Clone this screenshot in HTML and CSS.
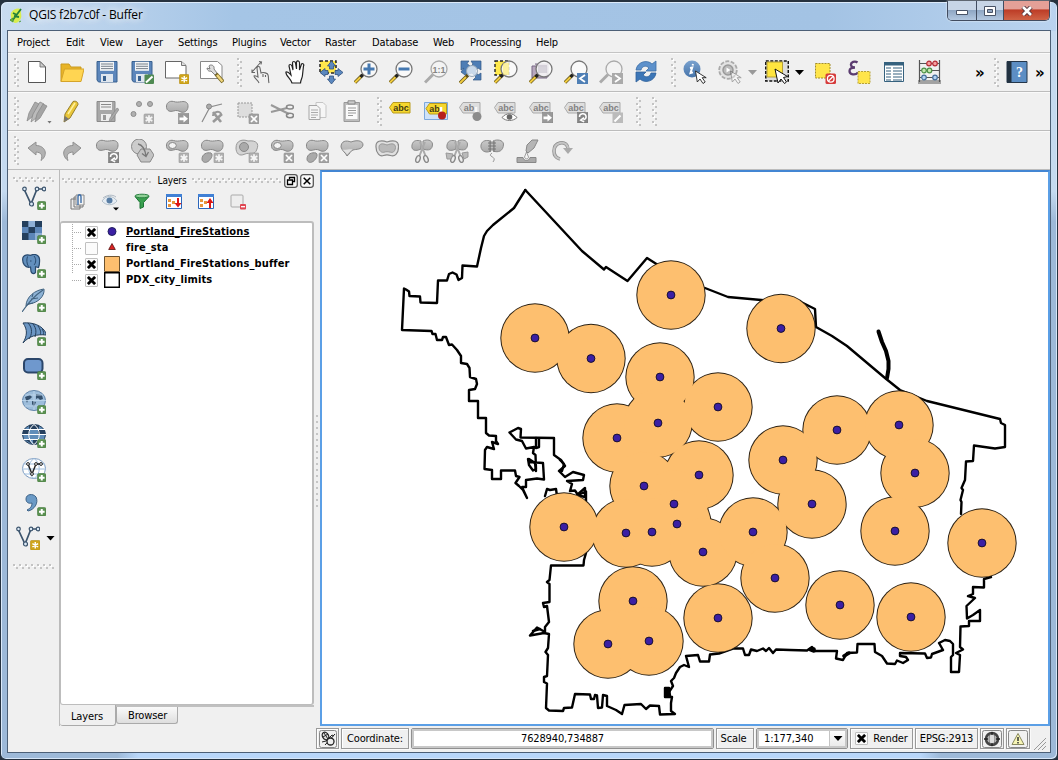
FILE: index.html
```html
<!DOCTYPE html>
<html lang="en">
<head>
<meta charset="utf-8">
<title>QGIS f2b7c0f - Buffer</title>
<link rel="stylesheet" href="styles.css">
</head>
<body>
<svg class="defs" aria-hidden="true">
  <defs>
    <linearGradient id="steel" x1="0" y1="0" x2="0" y2="1"><stop offset="0" stop-color="#7aa2cf"/><stop offset="1" stop-color="#4674aa"/></linearGradient>
    <linearGradient id="gray" x1="0" y1="0" x2="0" y2="1"><stop offset="0" stop-color="#c9c9c9"/><stop offset="1" stop-color="#aaa"/></linearGradient>
    <g id="plus"><rect x="15.5" y="15.5" width="8.5" height="8.5" rx="1.5" fill="#5a9150" stroke="#467a40" stroke-width=".6"/><path d="M19.75 17v5.6M17 19.75h5.6" stroke="#fff" stroke-width="2"/></g>
    <g id="star"><rect x="14.5" y="14.5" width="9.5" height="9.5" rx="1" fill="#cfa51c" stroke="#b48c10" stroke-width=".6"/><path d="M19.25 16v6.6M16.4 17.6l5.7 3.3M22.1 17.6l-5.7 3.3" stroke="#fff" stroke-width="1.4"/></g>
    <g id="gstar"><rect x="14" y="14" width="10" height="10" rx="1" fill="#b1b1b1" stroke="#999" stroke-width=".6"/><path d="M19 15.2v7.6M15.700 17.100l6.600 3.800M22.300 17.100l-6.600 3.800" stroke="#f6f6f6" stroke-width="1.700"/></g>
    <g id="gx"><rect x="14" y="14" width="10" height="10" rx="1" fill="#a3a3a3" stroke="#8e8e8e" stroke-width=".6"/><path d="M16 16l6 6M22 16l-6 6" stroke="#fff" stroke-width="1.700"/></g>
    <g id="garrow"><rect x="13.500" y="13.500" width="10.500" height="10.500" fill="#999" stroke="#858585" stroke-width=".6"/><path d="M14.500 17.400h4v-2.400l4.500 3.800-4.500 3.800v-2.400h-4z" fill="#fff"/></g>
    <g id="gturn"><rect x="13.500" y="13.500" width="10.500" height="10.500" fill="#858585" stroke="#777" stroke-width=".6"/><path d="M15.500 18a3.300 3 0 1 1 4 2.700M20 18.600l-3.300 2.500 3.500 1.700" fill="none" stroke="#fff" stroke-width="1.500"/></g>
    <path id="blob" d="M1.500 7.500c-.5-4.500 3-7 7-6 3 1 5 .5 8 .2 4-.7 7 1 6.500 5.300-.5 4.500-4 6-7 5-3-1.500-4.500-2-7.500-1C5 12 2 11 1.500 7.500z" fill="url(#gray)" stroke="#868686"/>
    <g id="lens"><path d="M1 22.500L8.500 15" stroke="#665718" stroke-width="3.400"/><path d="M1 22.500L6.600 17" stroke="#f1cb3e" stroke-width="2"/><path d="M6.500 17l3-3" stroke="#222" stroke-width="3"/><circle cx="15" cy="9" r="8" fill="#fafafa" fill-opacity=".85" stroke="#777" stroke-width="1.300"/></g>
    <g id="glens"><path d="M1 22.500L9 14.500" stroke="#aaa" stroke-width="3"/><circle cx="15" cy="9" r="8" fill="#f3f3f3" stroke="#aaa" stroke-width="1.300"/></g>
    <path id="cursor" d="M12.500 11l1.800 11 2.700-3 3 4.500 2.200-1.500-3-4.300h4z" fill="#fff" stroke="#222" stroke-width=".9"/>
    <g id="disk"><path d="M2 1.500h20v20.500H3.500L2 20z" fill="#5c86bb" stroke="#39618f"/><path d="M5 1.800h14v9H5z" fill="#f2f4f6"/><path d="M6 4h12M6 6.300h12M6 8.600h12" stroke="#69747f" stroke-width=".9"/><path d="M6 14h12v8H6z" fill="#dfe6ee"/><path d="M8 16h3v5H8z" fill="#39618f"/></g>
    <path id="tag" d="M.5 8.500L4 3.500h17v10.500H4z"/>
  </defs>
  <symbol id="new" viewBox="0 0 24 24"><path d="M3.500 1.500h11.500l5.500 5.500v15.500h-17z" fill="#fff" stroke="#555"/><path d="M15 1.500V7h5.500z" fill="#ccc" stroke="#666" stroke-width=".8"/></symbol>
  <symbol id="open" viewBox="0 0 24 24"><path d="M1 21.500V4h8l2 3h10v4" fill="#e8b427" stroke="#c99a20"/><path d="M4.500 9H24l-3 12.500H1z" fill="#ffd552" stroke="#d5a42a"/></symbol>
  <symbol id="save" viewBox="0 0 24 24"><use href="#disk"/></symbol>
  <symbol id="saveas" viewBox="0 0 24 24"><use href="#disk"/><rect x="14.500" y="14.500" width="9.500" height="9.500" rx="1" fill="#4f8a52"/><path d="M16 22.500l6.500-6" stroke="#fff" stroke-width="2"/></symbol>
  <symbol id="composer" viewBox="0 0 24 24"><path d="M.5 1.500h16l4.500 4v12.500H.5z" fill="#fff" stroke="#666"/><path d="M16.500 1.500v4H21" fill="#ddd" stroke="#777"/><use href="#star"/></symbol>
  <symbol id="manager" viewBox="0 0 24 24"><path d="M.5 1.500h17l4.500 4v13H.5z" fill="#fff" stroke="#888"/><path d="M9 6c1-2 6-1 5 3l3 4-2 2-4-4c-3 1-4-2-4-3l3 1z" fill="#ddd" stroke="#666" stroke-width=".8"/><path d="M16 14l7 8" stroke="#776624" stroke-width="4"/><path d="M17 15l5.500 6.500" stroke="#f0d67c" stroke-width="2.400"/></symbol>
  <symbol id="touch" viewBox="0 0 24 24"><path d="M10 23c-1-3-5-5-5-7 1-1 2 0 4 1L8 8c0-2 3-2 3 0l1 5c2-1 7 0 7 2 1 3 0 4 1 8M3 12l9-10M10 1.500l2.500.5-.5 2.500M3 9.500v3h3M14 14v3M16.500 15v2" fill="none" stroke="#666" stroke-width="1.100"/></symbol>
  <symbol id="pan" viewBox="0 0 24 24"><path d="M8 23c-1-4-7-8-6-11 2-1 4 2 5 3L5 6c0-2 2-2 3 0l1 4-.5-7c0-2 2.500-2 3 0l1 6V2c1-2 3-1 3 1v7l2-6c1-1 3 0 2 2l-1 9c0 3-2 5-2 8z" fill="#fff" stroke="#222" stroke-width="1.200"/></symbol>
  <symbol id="panto" viewBox="0 0 24 24"><path d="M1 1h16v12H1z" fill="#ffe84c" stroke="#222" stroke-width="1.500" stroke-dasharray="3 2"/><path d="M12.500 1l4 5h-2v3h-4V6h-2zM12.500 24l4-5h-2v-3h-4v3h-2zM1 12.500l5-4v2h3v4H6v2zM24 12.500l-5-4v2h-3v4h3v2z" fill="#5b88bf" stroke="#31537f" stroke-width=".8"/></symbol>
  <symbol id="zin" viewBox="0 0 24 24"><use href="#lens"/><path d="M15 3.500v11M9.500 9h11" stroke="#4578b0" stroke-width="3"/></symbol>
  <symbol id="zout" viewBox="0 0 24 24"><use href="#lens"/><path d="M9.500 9h11" stroke="#4578b0" stroke-width="3"/></symbol>
  <symbol id="zfull" viewBox="0 0 24 24"><path d="M2 1h8L8 3.500l3.500 3L14 4l-2-3h10v9l-3-2-3 3 3 4 3-2v7h-8l3-3-4-4-7 2-4-3 3-4-3 2z" fill="#4d7db5" stroke="#305785" stroke-width=".7"/><path d="M1 23l8-8" stroke="#5f5018" stroke-width="3.400"/><path d="M1 23l6-6" stroke="#f1cb3e" stroke-width="2"/><circle cx="13" cy="11" r="5.500" fill="#e9f0f8" fill-opacity=".8" stroke="#98a8b8"/></symbol>
  <symbol id="zsel" viewBox="0 0 24 24"><path d="M1 1h14v14H1z" fill="#ffe94d" stroke="#222" stroke-width="1.400" stroke-dasharray="3 2"/><use href="#lens"/><path d="M9 3h6v12H9z" fill="#ffe94d" opacity=".45"/></symbol>
  <symbol id="zlayer" viewBox="0 0 24 24"><path d="M3 6h15v12H3zM6 4h13v13" fill="#b7a7bd" stroke="#786986"/><use href="#lens"/><path d="M9 5h9v8H9z" fill="#aaa3b3" opacity=".35"/></symbol>
  <symbol id="zlast" viewBox="0 0 24 24"><use href="#lens"/><path d="M13 13h11v11H13z" fill="#4f7fb5"/><path d="M21 15l-5 3.500 5 3.500" fill="none" stroke="#fff" stroke-width="1.800"/></symbol>
  <symbol id="znext" viewBox="0 0 24 24"><use href="#glens"/><path d="M13 13h11v11H13z" fill="#aaa"/><path d="M16 15l5 3.500-5 3.500" fill="none" stroke="#fff" stroke-width="1.800"/></symbol>
  <symbol id="refresh" viewBox="0 0 24 24"><path d="M2 10C3 2 13-1 18 4l4-3v10H12l3-3C12 5 8 6 7 10z" fill="#5d91cb" stroke="#3d6ea6" stroke-width=".8"/><path d="M22 13c-1 8-11 11-16 6l-4 3V12h10l-3 3c3 3 7 2 8-2z" fill="#3c76b7" stroke="#2f619b" stroke-width=".8"/></symbol>
  <symbol id="identify" viewBox="0 0 24 24"><circle cx="9" cy="9" r="8.500" fill="url(#steel)"/><path d="M10 4l-.4 1.500M7 8l2.200-.5L7.500 13l2.500-.6" fill="none" stroke="#fff" stroke-width="2"/><use href="#cursor"/></symbol>
  <symbol id="action" viewBox="0 0 24 24"><circle cx="10" cy="10" r="8.800" fill="#e3e3e3" stroke="#aaa" stroke-width="1.800" stroke-dasharray="4 1.500"/><circle cx="10" cy="10" r="5" fill="#bbb" stroke="#999" stroke-width="1.500"/><path d="M8.500 7.500v5l4-2.500z" fill="#fff"/><g opacity=".4"><use href="#cursor"/></g></symbol>
  <symbol id="select" viewBox="0 0 24 24"><path d="M.8 1h22.500v20H.8z" fill="#ddd" stroke="#111" stroke-width="1.500" stroke-dasharray="3 1.500"/><path d="M2 2h15.500v15H2z" fill="#ffe53f" stroke="#b39f3b"/><path d="M10 9l3 14 3-4 3.500 4.500 2-1.500-3-4.500 4-1z" fill="#fff" stroke="#111"/></symbol>
  <symbol id="deselect" viewBox="0 0 24 24"><path d="M3.500 3.500h14.500v14.500H3.500z" fill="#ffe54a" stroke="#a38e29" stroke-dasharray="2 1"/><rect x="13.500" y="13.500" width="10.500" height="10.500" rx="1.500" fill="#d63b3b"/><circle cx="18.750" cy="18.750" r="3.300" fill="none" stroke="#fff" stroke-width="1.300"/><path d="M16.500 21l4.500-4.500" stroke="#fff" stroke-width="1.300"/></symbol>
  <symbol id="expr" viewBox="0 0 24 24"><path d="M10.500 2.500C8 .5 3.500 2 4 5c.2 2 2 2.500 4 2.500-3 0-5.500 1-5.500 3.500 0 4 6 4.500 8.500 1.500" fill="none" stroke="#5b3c70" stroke-width="2.300"/><path d="M11 11.500h12v12H11z" fill="#ffe54a" stroke="#b7a237" stroke-dasharray="2 1"/></symbol>
  <symbol id="table" viewBox="0 0 24 24"><path d="M2.500 2.500h19v19h-19z" fill="#fff" stroke="#35617e"/><path d="M2 2h20v3.500H2z" fill="#35617e"/><path d="M4 8h5M11 8h9M4 11h5M11 11h9M4 14h5M11 14h9M4 17h5M11 17h9M4 20h5M11 20h9" stroke="#35617e" stroke-width="1.200"/></symbol>
  <symbol id="abacus" viewBox="0 0 24 24"><path d="M2.500 0v22M22.500 0v22M1 23h23M2 3.500h21M2 10.500h21M2 17.500h21M1 21h23" stroke="#555" stroke-width="1.200"/><g stroke-width="1.200"><g fill="#f6a0a0" stroke="#b52b35"><circle cx="12" cy="3.500" r="2.300"/><circle cx="18" cy="3.500" r="2.300"/></g><g fill="#c6e7b0" stroke="#4c9147"><circle cx="7" cy="10.500" r="2.300"/><circle cx="12.500" cy="10.500" r="2.300"/></g><g fill="#b3d3f2" stroke="#456f9b"><circle cx="7" cy="17.500" r="2.300"/><circle cx="18" cy="17.500" r="2.300"/></g></g></symbol>
  <symbol id="book" viewBox="0 0 24 24"><path d="M2 1.500h20v21H2z" fill="#5c8ec4" stroke="#24364a"/><path d="M2 1.500h4.500v21H2z" fill="#223241"/></symbol>

  <symbol id="edits" viewBox="0 0 24 24"><g stroke="#8a8a8a" stroke-width=".8"><path d="M2 21l2-8L10 2l4 2L7 17z" fill="#aaa"/><path d="M6 22l2-8 7-12 4 2-8 14z" fill="#bbb"/><path d="M10 22l2-8 6-10 4 2-7 12z" fill="#a4a4a4"/></g></symbol>
  <symbol id="pencil" viewBox="0 0 24 24"><path d="M4 22l1-8L13 1.500c3-1 5 .5 5 3L10 18z" fill="#e9c63a" stroke="#8b7421" stroke-width=".9"/><path d="M8 14l7-11" stroke="#fff1a0" stroke-width="1.500"/><path d="M4 22l1-6 4 3z" fill="#777"/></symbol>
  <symbol id="gsave" viewBox="0 0 24 24"><path d="M2 1.500h18v20H2z" fill="#a8a8a8" stroke="#8a8a8a"/><path d="M5 2h12v8H5zM6 14h10v7H6z" fill="#eee"/><path d="M6 4.500h10M6 7h10" stroke="#888"/><path d="M8 15h3v5H8z" fill="#999"/><path d="M14 22l1-4 7-10 2 1.500-7 10z" fill="#aaa" stroke="#888" stroke-width=".7"/></symbol>
  <symbol id="addpt" viewBox="0 0 24 24"><g fill="#b0b0b0" stroke="#8d8d8d"><circle cx="9" cy="4" r="2.500"/><circle cx="20" cy="4" r="2.500"/><circle cx="3.500" cy="14" r="2.500"/></g><use href="#gstar"/></symbol>
  <symbol id="movef" viewBox="0 0 24 24"><use href="#blob"/><use href="#garrow"/></symbol>
  <symbol id="node" viewBox="0 0 24 24"><path d="M2 22L10 7l12-3" fill="none" stroke="#8a8a8a" stroke-width="1.200"/><circle cx="9" cy="6.500" r="2.500" fill="#aaa" stroke="#888"/><path d="M13 12l8 10M22 14l-9 8" stroke="#999" stroke-width="2.600"/><path d="M13 16c0-4 7-6 8-2" fill="none" stroke="#999" stroke-width="2"/></symbol>
  <symbol id="delsel" viewBox="0 0 24 24"><path d="M3 3h14v14H3z" fill="#ddd" stroke="#999" stroke-dasharray="2 1"/><use href="#gx"/></symbol>
  <symbol id="cut" viewBox="0 0 24 24"><path d="M1 5l18 9M1 12l16-4" stroke="#999" stroke-width="2"/><g fill="none" stroke="#888" stroke-width="1.600"><ellipse cx="20" cy="7" rx="3.500" ry="2"/><ellipse cx="20" cy="15.500" rx="3.500" ry="2.200"/></g></symbol>
  <symbol id="copy" viewBox="0 0 24 24"><path d="M11 2.500h7l3 3v12h-10z" fill="#f6f6f6" stroke="#c5c5c5"/><path d="M4 5.500h8l3 3v11H4z" fill="#f4f4f4" stroke="#a6a6a6"/><path d="M6 10h7M6 12.500h7M6 15h7M6 17.500h5" stroke="#aaa"/></symbol>
  <symbol id="paste" viewBox="0 0 24 24"><path d="M4 2.500h15.500v19H4z" fill="#bdbdbd" stroke="#999"/><path d="M6 5h11.500v14H6z" fill="#fafafa"/><path d="M8 .8h7V4H8z" fill="#ccc" stroke="#888"/><path d="M8 8h8M8 10.500h8M8 13h8M8 15.500h5" stroke="#999"/></symbol>

  <symbol id="undo" viewBox="0 0 24 24"><path d="M3 9l8-6v3.500c9 0 13 9 5 15 2-6 0-8-5-8.500V16z" fill="#b2b2b2" stroke="#909090"/></symbol>
  <symbol id="redo" viewBox="0 0 24 24"><path d="M21 9l-8-6v3.500c-9 0-13 9-5 15-2-6 0-8 5-8.500V16z" fill="#b2b2b2" stroke="#909090"/></symbol>
  <symbol id="rotf" viewBox="0 0 24 24"><use href="#blob"/><use href="#gturn"/></symbol>
  <symbol id="simplify" viewBox="0 0 24 24"><circle cx="9" cy="7.500" r="7.500" fill="#ccc" stroke="#888"/><path d="M11 10h9l4 6-4 7h-9l-4-7z" fill="#c3c3c3" stroke="#888"/><path d="M8 5c5 1 7 5 8 12M18.500 13L16 17.500l-4-3" fill="none" stroke="#777" stroke-width="1.300"/></symbol>
  <symbol id="ring" viewBox="0 0 24 24"><use href="#blob"/><ellipse cx="7.500" cy="6.500" rx="3.800" ry="3" fill="#f4f4f4" stroke="#888"/><use href="#gstar"/></symbol>
  <symbol id="part" viewBox="0 0 24 24"><use href="#blob"/><path d="M2 20c0-5 5-7 9-6 3 2-1 8-4 9-2 1-5 0-5-3z" fill="#aaa" stroke="#888"/><use href="#gstar"/></symbol>
  <symbol id="fill" viewBox="0 0 24 24"><path d="M1 9c0-8 7-9 12-7 9-1 11 3 9 8-2 7-7 3-12 5-6 3-9-1-9-6z" fill="#d3d3d3" stroke="#999"/><circle cx="9" cy="8" r="4.500" fill="#aaa" stroke="#888"/><use href="#gstar"/></symbol>
  <symbol id="delring" viewBox="0 0 24 24"><use href="#blob"/><ellipse cx="7.500" cy="6.500" rx="3.800" ry="3" fill="#f4f4f4" stroke="#888"/><use href="#gx"/></symbol>
  <symbol id="delpart" viewBox="0 0 24 24"><use href="#blob"/><path d="M2 20c0-5 5-7 9-6 3 2-1 8-4 9-2 1-5 0-5-3z" fill="#aaa" stroke="#888"/><use href="#gx"/></symbol>
  <symbol id="reshape" viewBox="0 0 24 24"><path d="M1 8c0-6 5-7 10-5 5-2 12-2 12 3-1 5-7 4-10 5-3 1-3 4-6 6-1-3-5-5-6-9z" fill="url(#gray)" stroke="#868686"/><path d="M2.500 10.500c2 1 8-1 10 0-2 1-3 3-5.500 5-1-2-3-3-4.500-5z" fill="#e2e2e2"/></symbol>
  <symbol id="offset" viewBox="0 0 24 24"><path d="M1 8c-.5-6 5-7.500 11-5 7-2.500 12-1 11.500 5 0 7-4 10-8 8.500-2-.7-5-.7-7 0C5 18 1 14 1 8z" fill="#e0e0e0" stroke="#888" stroke-width="1.200"/><path d="M4 8.500c0-4 3-4.500 8-2.500 5-2 8.500-1.500 8.500 2.500-.5 4.500-3 5.500-5 4.700-3-.7-4-.7-6.500 0-2 .8-5-1-5-4.700z" fill="#b9b9b9" stroke="#999"/></symbol>
  <symbol id="split" viewBox="0 0 24 24"><path d="M11 10C5 13 1 11 2 6c1-5 5-5 9-4zM13 10V2c4-2 9-1 9.500 3 0 6-4 7-9.500 5z" fill="url(#gray)" stroke="#8b8b8b"/><path d="M10 3l6 15M15 3L9 18" stroke="#aaa" stroke-width="2"/><g fill="#eee" stroke="#888" stroke-width="1.400"><ellipse cx="8" cy="20" rx="2" ry="3.500" transform="rotate(20 8 20)"/><ellipse cx="16" cy="20" rx="2" ry="3.500" transform="rotate(-20 16 20)"/></g></symbol>
  <symbol id="splitp" viewBox="0 0 24 24"><use href="#split"/><path d="M1 14l7 1-2 5H2zM17 14l6-1v5l-4 2z" fill="#bbb" stroke="#999"/></symbol>
  <symbol id="merge" viewBox="0 0 24 24"><path d="M11 12C5 15 0 11 1 6c1-5 6-5 10-4zM13 12V2c4-2 10-1 10.500 3 0 7-5 9-10.500 7z" fill="url(#gray)" stroke="#8b8b8b"/><path d="M8 4h8M8 7h8M8 10h8M10 2v11M14 2v11" stroke="#777"/><path d="M12 14c-6 4 6 3 1 9" fill="none" stroke="#999"/></symbol>
  <symbol id="trace" viewBox="0 0 24 24"><path d="M11 12l1-6 5-5h6l-4 8-6 5z" fill="#b5b5b5" stroke="#888"/><path d="M2 18.500h6c1 4 6 4 7 0h6v5H2z" fill="#aaa" stroke="#888"/><path d="M11.500 13l-2 5c1 3 4 2 4 0z" fill="#f5f5f5" stroke="#888" stroke-width=".8"/></symbol>
  <symbol id="rotsym" viewBox="0 0 24 24"><path d="M10 20C2 18 2 6 10 4c5-1 8 2 8 6" fill="none" stroke="#8d8d8d" stroke-width="3.500"/><path d="M10 20C2 18 2 6 10 4c5-1 8 2 8 6" fill="none" stroke="#c5c5c5" stroke-width="2"/><path d="M13 9h10l-5 6z" fill="#aaa"/></symbol>

  <symbol id="vector" viewBox="0 0 24 24"><path d="M2 3l7 15 6-15h7" fill="none" stroke="#3c546d" stroke-width="1.700"/><g fill="#dce9f5" stroke="#3c546d" stroke-width="1.200"><circle cx="2.500" cy="3" r="1.800"/><circle cx="15" cy="3" r="1.800"/><circle cx="22" cy="3" r="1.800"/><circle cx="9.500" cy="18" r="2"/></g></symbol>
  <symbol id="addvec" viewBox="0 0 24 24"><use href="#vector"/><use href="#plus"/></symbol>
  <symbol id="addras" viewBox="0 0 24 24"><path d="M0 1h20v19H0z" fill="#5c86b8"/><path d="M0 1h6.500v6H0zM13 1h7v6h-7zM6.500 7H13v6H6.500zM0 13h6.500v7H0z" fill="#243f5d"/><path d="M6.500 1H13v6H6.500zM13 13h7v7h-7z" fill="#8fb0d6"/><use href="#plus"/></symbol>
  <symbol id="addpg" viewBox="0 0 24 24"><path d="M.8 4C2 0 6 .5 9 1.300 12-.5 17 .5 17.500 5c.3 4 0 6-1 8.500l-3-.8v5.800c-2 2-4 .8-4.500-1l-.5-4.500C3 14.500 0 9 .8 4z" fill="#628fbd" stroke="#294a6e" stroke-width="1.200"/><path d="M5.500 2.500c-1 3-1 7 1 10M12 2c2.500 3 2 7 0 9M8 7h1.500" fill="none" stroke="#294a6e"/><use href="#plus"/></symbol>
  <symbol id="addspl" viewBox="0 0 24 24"><path d="M4 18C4 9 13 2 22 1c1 7-6 14-15 15z" fill="#8db2d5" stroke="#41627f"/><path d="M0 24C6 15 12 8 21 2M9 11l7-1M6 16l5-1M10 9l1-3" fill="none" stroke="#41627f" stroke-width="1.100"/><use href="#plus"/></symbol>
  <symbol id="addms" viewBox="0 0 24 24"><path d="M1 1c9-1 19 2 23 10v2c-9-1-17 1-23 8 4-7 5-13 0-20z" fill="#6b96c4" stroke="#26405c"/><path d="M6 1c5 5 4 12 1 16M11 2c4 5 3 9 2 13M16 4c3 4 3 7 2 9M20 7c2 3 2 4 1 6" fill="none" stroke="#26405c"/><use href="#plus"/></symbol>
  <symbol id="addora" viewBox="0 0 24 24"><rect x="2" y="3" width="18.500" height="13.500" rx="4" fill="#6f98cd" stroke="#2b466a" stroke-width="2"/><use href="#plus"/></symbol>
  <symbol id="addwms" viewBox="0 0 24 24"><ellipse cx="12" cy="10.500" rx="11.500" ry="10" fill="#9dbddb" stroke="#6184a9"/><path d="M3 7l5-2 2 2-2 2-2 1-1 3zM14 4l6 1 1 4-3 1-2-2-2 1zM10 11l4 1-2 5-2-3z" fill="#344f6b"/><path d="M0 10.500h24M12 1v19M3 5h18M3 16h18" stroke="#c0d8ee" stroke-width=".8"/><use href="#plus"/></symbol>
  <symbol id="addwcs" viewBox="0 0 24 24"><ellipse cx="12" cy="10.500" rx="11.500" ry="10" fill="#608db9" stroke="#233e5b"/><path d="M1 6h6v5H1zM16 6h7v5h-7zM7 1h10v4H7zM2 15h5l3 5zM11 15h5v5h-5z" fill="#26405e"/><path d="M1 5.500h22M0 10.500h24M2 15.500h20M12 .5C5 5 5 16 12 20.500M12 .5c7 4.500 7 15.500 0 20" fill="none" stroke="#fff"/><use href="#plus"/></symbol>
  <symbol id="addwfs" viewBox="0 0 24 24"><ellipse cx="12" cy="10.500" rx="11.500" ry="10" fill="#fff" stroke="#7c9bc0"/><path d="M1 6h22M0 11h24M2 16h20M12 .5C5 5 5 16 12 20.500M12 .5c7 4.500 7 15.500 0 20" fill="none" stroke="#a0bfdf"/><path d="M6 6l4 10 4-10h5" fill="none" stroke="#222" stroke-width="1.400"/><g fill="#fff" stroke="#222"><circle cx="6" cy="6" r="1.400"/><circle cx="14" cy="6" r="1.400"/><circle cx="19" cy="6" r="1.400"/><circle cx="10" cy="16" r="1.400"/></g><use href="#plus"/></symbol>
  <symbol id="addtxt" viewBox="0 0 24 24"><path d="M5 18c4-2 5-4 5-7-4 1-6-1-6-4 0-5 7-6 10-2 3 6-2 13-8 14z" fill="#6b9ac6" stroke="#3e6388"/><use href="#plus"/></symbol>
  <symbol id="newvec" viewBox="0 0 24 24"><use href="#vector"/><use href="#star"/></symbol>

  <symbol id="group" viewBox="0 0 18 18"><path d="M2 6h9v10H2zM5 4h9v10H5z" fill="#eee" stroke="#777"/><path d="M7 2h8v10H7z" fill="#f4f4f4" stroke="#888"/><path d="M9 12V4c0-3 3-3 3 0v6" fill="none" stroke="#3e6ea7" stroke-width="1.400"/></symbol>
  <symbol id="eye" viewBox="0 0 18 18"><path d="M1 8c4-6 11-6 15 0-4 5-11 5-15 0z" fill="#e6edf3" stroke="#a6b4c0" stroke-width=".8"/><circle cx="8.500" cy="7.500" r="3" fill="#587da4"/><path d="M2 5c4-3 9-4 13-1" fill="none" stroke="#abb7c2"/><path d="M12 14.500h6l-3 3z" fill="#000"/></symbol>
  <symbol id="funnel" viewBox="0 0 18 18"><path d="M2 3.500l5 6v6l3.500-1.500V9.500L16 3.500z" fill="#39a04f" stroke="#1d7535"/><ellipse cx="9" cy="3" rx="7" ry="1.800" fill="#8fd096" stroke="#2b8041"/></symbol>
  <symbol id="expand" viewBox="0 0 18 18"><path d="M1.500 1.500h15v14h-15z" fill="#fff" stroke="#2c66bb"/><path d="M1 1h16v3H1z" fill="#4080d5"/><path d="M3 6h3v3H3zM3 11h3v3H3zM7 8h3v3H7z" fill="#e9963b"/><path d="M12 5v5h-2.500l3.500 4.500 3.500-4.500H14V5z" fill="#dd1815"/></symbol>
  <symbol id="collapse" viewBox="0 0 18 18"><path d="M1.500 1.500h15v14h-15z" fill="#fff" stroke="#2c66bb"/><path d="M1 1h16v3H1z" fill="#4080d5"/><path d="M3 6h3v3H3zM3 11h3v3H3zM7 8h3v3H7z" fill="#e9963b"/><path d="M12 15v-5h-2.500l3.500-5 3.500 5H14v5z" fill="#dd1815"/></symbol>
  <symbol id="remove" viewBox="0 0 18 18"><rect x="2" y="2" width="12" height="12" rx="1" fill="#eee" stroke="#aaa"/><rect x="11" y="11" width="6" height="5.500" rx="1" fill="#df4652"/><path d="M12 13.700h4" stroke="#fff" stroke-width="1.300"/></symbol>
</svg>

<div class="window">
  <header class="titlebar">
    <svg class="logo" viewBox="0 0 14 16"><path d="M2 5c3-5 7-5 10-4-1 4 2 7-1 11-2 3-5 4-7 2 2-2 0-2-2-2 1-2-1-4 0-7z" fill="#d9ed4e"/><path d="M3 13L12 1M5 8l5 1M4 5l4 2" stroke="#23803a" stroke-width="1.800" fill="none"/><path d="M1 12l3-2v4zM10 14l2-1" stroke="#4b9b3b" fill="#83b438"/></svg>
    <h1>QGIS f2b7c0f - Buffer</h1>
    <div class="winbtns">
      <span class="wb wmin"><svg width="12" height="10"><path d="M.5 4.500h11v4H.5z" fill="#fff" stroke="#485366"/></svg></span>
      <span class="wb wmax"><svg width="12" height="10"><path d="M.5.5h11v9H.5z" fill="#fff" stroke="#485366"/><path d="M3.500 3.500h5v3h-5z" fill="#91a5c0" stroke="#485366"/></svg></span>
      <span class="wb wclose"><svg width="12" height="10"><path d="M2 1l8 8M10 1L2 9" stroke="#54343a" stroke-width="4.500"/><path d="M2 1l8 8M10 1L2 9" stroke="#fff" stroke-width="2.600"/></svg></span>
    </div>
  </header>
  <div class="client">
    <nav class="menu"><span style="width:49px">Project</span><span style="width:34px">Edit</span><span style="width:36px">View</span><span style="width:42px">Layer</span><span style="width:54px">Settings</span><span style="width:48px">Plugins</span><span style="width:45px">Vector</span><span style="width:47px">Raster</span><span style="width:61px">Database</span><span style="width:37px">Web</span><span style="width:66px">Processing</span><span>Help</span></nav>

    <div class="bar bar1">
      <i class="grip"></i>
      <svg class="ic"><use href="#new"/></svg><svg class="ic"><use href="#open"/></svg><svg class="ic"><use href="#save"/></svg><svg class="ic"><use href="#saveas"/></svg><svg class="ic"><use href="#composer"/></svg><svg class="ic"><use href="#manager"/></svg>
      <i class="grip mid"></i>
      <svg class="ic"><use href="#touch"/></svg><svg class="ic"><use href="#pan"/></svg><svg class="ic"><use href="#panto"/></svg><svg class="ic"><use href="#zin"/></svg><svg class="ic"><use href="#zout"/></svg><svg class="ic"><use href="#glens"/><text x="15" y="12.500" text-anchor="middle" class="t11">1:1</text></svg><svg class="ic"><use href="#zfull"/></svg><svg class="ic"><use href="#zsel"/></svg><svg class="ic"><use href="#zlayer"/></svg><svg class="ic"><use href="#zlast"/></svg><svg class="ic"><use href="#znext"/></svg><svg class="ic"><use href="#refresh"/></svg>
      <i class="grip mid"></i>
      <svg class="ic"><use href="#identify"/></svg><svg class="ic"><use href="#action"/></svg><i class="drop dim"></i><svg class="ic"><use href="#select"/></svg><i class="drop"></i><svg class="ic"><use href="#deselect"/></svg><svg class="ic"><use href="#expr"/></svg><svg class="ic"><use href="#table"/></svg><svg class="ic"><use href="#abacus"/></svg>
      <span class="more">»</span>
      <i class="grip tail"></i>
      <svg class="ic"><use href="#book"/><text x="14.500" y="17" text-anchor="middle" class="thelp">?</text></svg><span class="more last">»</span>
    </div>

    <div class="bar bar2">
      <i class="grip"></i>
      <span class="badged"><svg class="ic"><use href="#edits"/></svg><i class="tiny"></i></span><svg class="ic"><use href="#pencil"/></svg><svg class="ic"><use href="#gsave"/></svg><svg class="ic"><use href="#addpt"/></svg><svg class="ic"><use href="#movef"/></svg><svg class="ic"><use href="#node"/></svg><svg class="ic"><use href="#delsel"/></svg><svg class="ic"><use href="#cut"/></svg><svg class="ic"><use href="#copy"/></svg><svg class="ic"><use href="#paste"/></svg>
      <i class="grip mid"></i>
      <svg class="ic"><use href="#tag" class="tagy"/><text x="12" y="11.500" text-anchor="middle" class="tabc">abc</text></svg>
      <svg class="ic"><path d="M.5 3.500h23v17H.5z" fill="#cfe2f8" stroke="#7ca8dd"/><use href="#tag" x="1.500" y="1" class="tagy"/><text x="10.500" y="12.500" text-anchor="middle" class="tabc">ab</text><path d="M17 8v7" stroke="#fff" stroke-width="2.500"/><circle cx="18" cy="16.500" r="4" fill="#b5201e"/></svg>
      <svg class="ic"><use href="#tag" class="tagg"/><text x="10" y="11.500" text-anchor="middle" class="tgabc">ab</text><path d="M17 8v7" stroke="#f7f7f7" stroke-width="2.500"/><circle cx="18" cy="17.500" r="4.500" fill="#8b8b8b"/></svg>
      <svg class="ic"><use href="#tag" class="tagg"/><text x="12" y="11.500" text-anchor="middle" class="tgabc">abc</text><path d="M8 18.500c4-5 11-5 15 0-4 4-11 4-15 0z" fill="#fff" stroke="#777"/><circle cx="15.500" cy="18" r="2.800" fill="#666"/></svg>
      <svg class="ic"><use href="#tag" class="tagg"/><text x="12" y="11.500" text-anchor="middle" class="tgabc">abc</text><use href="#garrow"/></svg>
      <svg class="ic"><use href="#tag" class="tagg"/><text x="12" y="11.500" text-anchor="middle" class="tgabc">abc</text><use href="#gturn"/></svg>
      <svg class="ic"><use href="#tag" class="tagg"/><text x="12" y="11.500" text-anchor="middle" class="tgabc">abc</text><path d="M13.500 13.500H24V24H13.500z" fill="#bbb"/><path d="M15.500 22.500l6-6" stroke="#fff" stroke-width="2"/></svg>
      <i class="grip mid"></i><i class="grip next"></i>
    </div>

    <div class="bar bar3">
      <i class="grip"></i>
      <svg class="ic"><use href="#undo"/></svg><svg class="ic"><use href="#redo"/></svg><svg class="ic"><use href="#rotf"/></svg><svg class="ic"><use href="#simplify"/></svg><svg class="ic"><use href="#ring"/></svg><svg class="ic"><use href="#part"/></svg><svg class="ic"><use href="#fill"/></svg><svg class="ic"><use href="#delring"/></svg><svg class="ic"><use href="#delpart"/></svg><svg class="ic"><use href="#reshape"/></svg><svg class="ic"><use href="#offset"/></svg><svg class="ic"><use href="#split"/></svg><svg class="ic"><use href="#splitp"/></svg><svg class="ic"><use href="#merge"/></svg><svg class="ic"><use href="#trace"/></svg><svg class="ic"><use href="#rotsym"/></svg>
    </div>

    <div class="work">
      <aside class="side">
        <i class="hgrip"></i>
        <svg class="si"><use href="#addvec"/></svg><svg class="si"><use href="#addras"/></svg><svg class="si"><use href="#addpg"/></svg><svg class="si"><use href="#addspl"/></svg><svg class="si"><use href="#addms"/></svg><svg class="si"><use href="#addora"/></svg><svg class="si"><use href="#addwms"/></svg><svg class="si"><use href="#addwcs"/></svg><svg class="si"><use href="#addwfs"/></svg><svg class="si"><use href="#addtxt"/></svg>
        <div class="sidelast"><svg class="si"><use href="#newvec"/></svg><i class="drop"></i></div>
        <i class="hgrip"></i>
      </aside>

      <section class="dock">
        <div class="docktitle"><i class="hgrip"></i><span>Layers</span><i class="hgrip"></i>
          <svg class="dbtn" viewBox="0 0 14 14"><rect x=".7" y=".7" width="12.600" height="12.600" rx="2.500" fill="#fafafa" stroke="#555" stroke-width="1.300"/><path d="M5.500 5V3.500h5v4H9M3.500 6h5v4.500h-5z" fill="none" stroke="#000" stroke-width="1.300"/></svg>
          <svg class="dbtn" viewBox="0 0 14 14"><rect x=".7" y=".7" width="12.600" height="12.600" rx="2.500" fill="#fafafa" stroke="#555" stroke-width="1.300"/><path d="M3.700 3.700l6.600 6.600M10.300 3.700l-6.600 6.600" stroke="#000" stroke-width="1.500"/></svg>
        </div>
        <div class="docktools"><svg><use href="#group"/></svg><svg><use href="#eye"/></svg><svg><use href="#funnel"/></svg><svg><use href="#expand"/></svg><svg><use href="#collapse"/></svg><svg><use href="#remove"/></svg></div>
        <ul class="tree">
          <li><i class="branch"></i><svg class="chk on" viewBox="0 0 8 8"><path d="M.8.8l6.400 6.400M7.200.8L.8 7.200"/></svg><svg class="sym" viewBox="0 0 16 16"><circle cx="8" cy="7.500" r="4" fill="#3b1fa4" stroke="#222060"/></svg><span class="u">Portland_FireStations</span></li>
          <li><i class="branch"></i><svg class="chk" viewBox="0 0 8 8"></svg><svg class="sym" viewBox="0 0 16 16"><path d="M8 3.500l3.300 6H4.700z" fill="#db2222" stroke="#551010" stroke-width=".8"/></svg><span>fire_sta</span></li>
          <li><i class="branch"></i><svg class="chk on" viewBox="0 0 8 8"><path d="M.8.8l6.400 6.400M7.200.8L.8 7.200"/></svg><svg class="sym" viewBox="0 0 16 16"><path d="M.5.5h15v15H.5z" fill="#fdbf6f" stroke="#6b5230"/></svg><span>Portland_FireStations_buffer</span></li>
          <li><i class="branch end"></i><svg class="chk on" viewBox="0 0 8 8"><path d="M.8.8l6.400 6.400M7.200.8L.8 7.200"/></svg><svg class="sym" viewBox="0 0 16 16"><path d="M.7.7h14.600v14.600H.7z" fill="#fff" stroke="#000" stroke-width="1.400"/></svg><span>PDX_city_limits</span></li>
        </ul>
        <div class="tabs"><span class="tab on">Layers</span><span class="tab">Browser</span></div>
      </section>

      <div class="splitter"><i></i></div>

      <div class="mapcol">
        <div class="map">
          <svg viewBox="322 172 726 552" width="726" height="552">
            <g fill="none" stroke="#000" stroke-width="2.400" stroke-linejoin="round" stroke-linecap="round">
              <path d="M525.300 190L514 208 493 225 487 231 484 236 481 248 477 266.500 462.500 265.500 462 278 458.500 280 456.500 274.500 452.500 272.500 449 274 447 280.500 438 280.500 437 303 420.500 302.500 420 296.500 409.500 296 409 291.500 406 289.500 404 288.500 402 330 431.500 331 432.500 334 435.500 334 437 340 442 340 443 337 446 337 449 345 452 344.500 457 350 461 356 461 363 467 364 469.500 368 470 377 476 379 477 384 475 389 469 390 469 401 478 401 478 418 486 418 486 433 489 435.500 496 436 496 441 498 444 492 442 494 449 487 447 485 450 484.500 469 492 470 492 479 501 479 501 470.500 515 470.500 516 476 519.500 477 515.500 483 519 486 523 490 527 498 522 487 526 487 526 480 537 478.500 544 479.500 543 463 530 462 528 459 529 465 533 470.500 536 469 535.500 455 533 453 534 447 526 448.500 522 441 516 439.500 509.500 432.500 518 428 521 429 520.500 437.500 554 438 554 455 561 460 565 466 559 471 565 477 573 472 584 475 583 480 567 481 572 484 570 491 575 490.500 578 495 586 491.500 586 553 584 560 583.500 565.500 551 565.500 549.500 580 547 582 549.500 584 549.500 602 543 603 544 607 547 606 549 622 545 627 545 632 537 627.500 530 635.500 544 633 549 634 548 648 545.500 652 548 655 547 676 544 677 544 682 547 683.500 546 708 549 710.500 563 711 564 708 572 707.500 575 694 590 694.500 591 699 594 699 595 695 597 695.500 598 708 602 707.500 603 695 607 696 607 706 616 710 622 714 624.500 705 641 704 646 709 650 705.500 659 706 660 714.500 675 714 671 711 671 703 672 697 665 697 665 688 669 688 669 692 673 686 671 681 674 678 676 673 680 667 684 665 689 667 686 656 698 655 700 661.500 709 661.500 710 654.500 719 653.500 733 648.500 743 648.500 745 655 749 655 751 649.500 757 651 763 648.500 766 651 769 648 773 653 776 649.500 790 650 807 650.500 812 647 815 651 837 651 836 658.500 843 660 847 653 857 652.500 857.500 644 874.500 644 875 652 882 656 887 663.500 895 664 897 660.500 903 663 908 660 906 657 900 656 900 653 925 653.500 927 658 931 657.500 932 654 943 650 939 643 945 640 950 641 953 644 953 655 951 657 951 672 959 672 960 655 956 653 963 649.500 960 647 960.500 626.500 969 626 969 621 980 621 980 610 973 615 967 618.500 966.500 606 975 598 968 596 973 594 973 587 984 587.500 984 579 991 577"/>
              <path d="M961 514L961.500 502 960.500 500 963 490 961.500 488 965 480 966 461.500 973 461 974 445.500 995 448.500 1005 447 1005 425 1001 423 1000 419 927 401 900 390 885 378 847 346 832 336 816 327 815 309 803 303 783 302 728 297 705 288 M525.300 190L582 251 604 269.500 606 267 627.500 281 647 258 658 265"/>
              <path d="M545 496L547 489 550 490 556 489 557 496M536 438v10l3-1v-8M529 459l6 4 1 8M560 460l4 4-2 7M533 631l7-2M577 495l8-7v9z"/>
              <path d="M878.500 331.500L882 342 886 351 888.500 361 888.500 369 887 378" stroke-width="4"/>
              <path d="M666.500 689v7h3l-1-7zM810 649.500l4-.5v2zM844 656l5-3" stroke-width="3.500"/>
            </g>
            <g id="halo"></g>
            <g id="buffers"></g>
            <g id="dots"></g>
          </svg>
        </div>
        <footer class="status">
          <span class="sbox mouse"><svg viewBox="0 0 18 18" width="18" height="18"><rect x=".5" y=".5" width="17" height="17" rx="2" fill="#f1f1f1" stroke="#888"/><ellipse cx="6.500" cy="6" rx="3" ry="4" transform="rotate(-30 6.500 6)" fill="#ddd" stroke="#222" stroke-width="1.300"/><path d="M4 7l5-3M5 3l4 6M3 12l4-1 6-6 2 1M6 15l10-11" stroke="#222" fill="none"/><circle cx="11.500" cy="11.500" r="3.500" fill="#eee" stroke="#222" stroke-width="1.300"/></svg></span>
          <span class="sbox coordl">Coordinate:</span>
          <span class="field coord">7628940,734887</span>
          <span class="sbox scalel">Scale</span>
          <span class="field scale"><b>1:177,340</b><em><i class="drop"></i></em></span>
          <span class="sbox render"><svg class="chk on" viewBox="0 0 8 8"><path d="M.8.8l6.400 6.400M7.200.8L.8 7.200"/></svg>Render</span>
          <span class="sbox epsg">EPSG:2913</span>
          <span class="sbox sq"><svg viewBox="0 0 20 18" width="20" height="18"><rect x=".5" y=".5" width="19" height="17" rx="2" fill="#f1f1f1" stroke="#888"/><circle cx="10" cy="9" r="6" fill="#ddd" stroke="#444" stroke-width="2.600"/><ellipse cx="10" cy="9" rx="3" ry="6" fill="none" stroke="#555" stroke-width=".8"/><path d="M2 9h4M14 9h4M10 2v3M10 13v3" stroke="#222" stroke-width="1.400"/></svg></span>
          <span class="sbox sq"><svg viewBox="0 0 20 18" width="20" height="18"><rect x=".5" y=".5" width="19" height="17" rx="2" fill="#f1f1f1" stroke="#888"/><path d="M10 3.500l6 11H4z" fill="#f7f5b5" stroke="#88885e" stroke-linejoin="round"/><path d="M10 7v4M10 12v1.600" stroke="#333" stroke-width="1.500"/></svg></span>
          <svg class="size" viewBox="0 0 12 12"><path d="M0 12L12 0M4 12l8-8M8 12l4-4" stroke="#999"/></svg>
        </footer>
      </div>
    </div>
  </div>
</div>
<script src="map.js"></script>
</body>
</html>
```

FILE: styles.css
```css
* { box-sizing: border-box; }
html, body { margin: 0; height: 100%; overflow: hidden; }
body { background: #26323f; font: 11px/14px "DejaVu Sans Condensed", "DejaVu Sans", sans-serif; font-stretch: condensed; letter-spacing: -.14px; color: #000; }
svg { display: block; flex: none; }
i { display: block; flex: none; font-style: normal; }
.defs { position: absolute; width: 0; height: 0; }

.window { width: 1058px; height: 760px; display: flex; flex-direction: column; padding: 0 7px 6px; border: 1px solid #26323f; border-top-width: 2px; border-radius: 7px 7px 6px 6px; box-shadow: inset 1px 1px #dceafa, inset -1px -1px #d6e6f8;
  background: linear-gradient(90deg, transparent 11%, #b9d7fa 13%, #b9d7fa 87%, transparent 89%) 0 100%/100% 7px no-repeat, linear-gradient(90deg, #c9dcf0, #a5c5e6 22%, #a3c3e4 78%, #bad3ef) 0 0/100% 29px no-repeat, linear-gradient(#c5daf0 25%, #9db9d8 29%); }
.titlebar { height: 28px; flex: none; display: flex; align-items: flex-start; }
.logo { width: 14px; height: 16px; margin: 6px 6px 0 1px; }
h1 { margin: 3px 0 0; padding: 0 10px 0 0; font: 12px/20px "Open Sans", "Noto Sans", sans-serif; letter-spacing: -.2px; text-shadow: 0 0 8px #fff, 0 0 8px #fff; }
.winbtns { margin: -1px 0 0 auto; display: flex; width: 103px; height: 20px; border: 1px solid #414c60; border-top: 0; border-radius: 0 0 5px 5px; box-shadow: 0 0 2px #fff; overflow: hidden; }
.wb { display: flex; align-items: center; justify-content: center; background: linear-gradient(#c7d5e6 45%, #8fa7c4 50%, #b3c8e0); border-right: 1px solid #414c60; }
.wmin { width: 29px; } .wmax { width: 27px; }
.wclose { flex: 1; border: 0; background: linear-gradient(#e4a097 40%, #bd3d27 48%, #cf6346); }

.client { flex: 1; min-height: 0; display: flex; flex-direction: column; background: #f0f0f0; border: 1px solid #4c5f76; margin: 0 -1px 0 -1px; }
.menu { height: 22px; flex: none; display: flex; padding: 5px 0 0 9px; border-bottom: 1px solid #c4c4c4; }
.menu span { white-space: nowrap; }
.bar { height: 39px; flex: none; display: flex; align-items: center; padding-left: 6px; border-bottom: 1px solid #bcbcbc; border-top: 1px solid #fafafa; }
.ic { width: 24px; height: 24px; margin: 0 6px 0 5px; }
.bar1 .ic { margin-bottom: 2px; }
.grip { width: 6px; height: 30px; background: radial-gradient(circle at 1px 1px, #c3c3c3 1px, transparent 1.4px) 0 0/6px 6px, radial-gradient(circle at 4px 4px, #c3c3c3 1px, transparent 1.4px) 0 0/6px 6px, radial-gradient(circle at 2px 2px, #fff 1px, transparent 1.4px) 0 0/6px 6px; }
.mid { margin: 0 1px 0 7px; } .next { margin-left: 9px; } .tail { margin-left: 9px; }
.bar2 .mid ~ .ic { margin: 0 6px 2px 5px; }
.drop { width: 9px; height: 5px; background: #000; clip-path: polygon(0 0, 100% 0, 50% 100%); }
.bar .drop { margin: 0 3px 0 0; }
.drop.dim { background: #999; }
.more { width: 10px; margin-left: 28px; font: bold 15px/14px "DejaVu Sans", sans-serif; letter-spacing: 0; }
.last { margin-left: 0; }
.badged { position: relative; }
.tiny { position: absolute; right: 3px; bottom: 0; width: 5px; height: 3px; background: #777; clip-path: polygon(0 0, 100% 0, 50% 100%); }
.t11 { font: bold 9px "Liberation Sans", sans-serif; letter-spacing: 0; fill: #858585; }
.thelp { font: bold 14px "Liberation Serif", serif; fill: #fff; }
.tabc, .tgabc { font: bold 9px "Liberation Sans", sans-serif; letter-spacing: 0; fill: #433b12; }
.tgabc { fill: #818181; }
.tagy { fill: #f6d72d; stroke: #b99b1d; }
.tagg { fill: #dedede; stroke: #aaa; }

.work { flex: 1; min-height: 0; display: flex; }
.side { width: 51px; flex: none; padding: 7px 0 0 5px; }
.hgrip { height: 6px; background: radial-gradient(circle at 1px 1px, #c3c3c3 1px, transparent 1.4px) 0 0/6px 6px, radial-gradient(circle at 4px 4px, #c3c3c3 1px, transparent 1.4px) 0 0/6px 6px, radial-gradient(circle at 2px 2px, #fff 1px, transparent 1.4px) 0 0/6px 6px; }
.side .hgrip { width: 42px; }
.si { width: 24px; height: 24px; margin: 3px 0 10px 9px; }
.side .si + .si { margin-top: 0; }
.sidelast { display: flex; align-items: center; height: 24px; margin-bottom: 14px; }
.sidelast .si { margin: 0 6px 0 3px; }

.dock { width: 255px; height: 556px; flex: none; display: flex; flex-direction: column; border-left: 1px solid #bbb; }
.docktitle { height: 19px; flex: none; display: flex; align-items: center; gap: 2px; padding: 2px 0 0 2px; }
.docktitle .hgrip { flex: 1; }
.docktitle span { padding: 0 4px; font-size: 10px; }
.dbtn { width: 14px; height: 14px; }
.docktools { height: 32px; flex: none; display: flex; gap: 14px; padding: 4px 0 0 9px; }
.docktools svg { width: 18px; height: 18px; }
.tree { flex: 1; margin: 0; padding: 1px 0 0 11px; list-style: none; background: #fff; border: 2px solid #bdbdbd; border-width: 2px 2px 1px 1px; border-radius: 3px; font-weight: bold; letter-spacing: .12px; }
.tree li { display: flex; height: 16px; align-items: center; }
.tree span { white-space: nowrap; margin-left: 6px; }
.u { text-decoration: underline; }
.branch { width: 10px; height: 16px; margin-right: 3px; background: linear-gradient(90deg, #aaa 1px, transparent 1px) 0 8px/2px 1px repeat-x, linear-gradient(#aaa 1px, transparent 1px) 0 0/1px 2px repeat-y; }
.end { background: linear-gradient(90deg, #aaa 1px, transparent 1px) 0 8px/2px 1px repeat-x, linear-gradient(#aaa 1px, transparent 1px) 0 0/1px 8px no-repeat; }
.chk { width: 13px; height: 13px; padding: 1px; border: 1px solid #c0c0c0; border-radius: 1px; background: #fbfbfb; margin-right: 6px; }
.chk path { stroke: #000; stroke-width: 2.5; }
.sym { width: 16px; height: 16px; }
.tabs { height: 21px; flex: none; display: flex; align-items: flex-start; border-top: 2px solid #c0c0c0; }
.tab { width: 62px; height: 17px; padding: 2px 0 0 11px; border: 1px solid #aaa; border-top: 0; border-radius: 0 0 3px 3px; background: linear-gradient(#fafafa, #dedede); }
.tab.on { width: 56px; height: 21px; margin-top: -2px; padding: 5px 0 0 11px; background: #f0f0f0; border-left: 0; }
.splitter { width: 6px; flex: none; display: flex; align-items: center; }
.splitter i { width: 3px; height: 92px; margin-left: 2px; background: radial-gradient(circle at 1px 1px, #c5c5c5 1px, transparent 1.4px) 0 0/3px 6px; }

.mapcol { width: 730px; flex: none; display: flex; flex-direction: column; }
.map { height: 556px; flex: none; width: 730px; background: #fff; border: 2px solid #5b9fe6; border-top-color: #4386d3; }
.status { display: flex; height: 22px; margin: 2px 0 0 -4px; gap: 2px; align-items: stretch; white-space: nowrap; }
.sbox { border: 1px solid #999; box-shadow: inset 1px 1px #fff, 1px 1px #fafafa; display: flex; align-items: center; justify-content: center; height: 21px; flex: none; }
.mouse { width: 23px; } .coordl { width: 68px; } .scalel { width: 38px; padding-right: 3px; } .render { width: 63px; } .epsg { width: 63px; } .sq { width: 24px; }
.field { background: #fff; border: 1px solid #909090; outline: 2px solid #c8c8c8; outline-offset: -3px; border-radius: 2px; display: flex; align-items: center; height: 21px; flex: none; }
.coord { width: 303px; justify-content: center; }
.scale { width: 92px; padding-left: 7px; }
.scale b { font-weight: normal; flex: 1; }
.scale em { width: 17px; height: 17px; margin-right: 1px; display: flex; align-items: center; justify-content: center; border-left: 1px solid #c4c4c4; background: linear-gradient(#fff, #e9e9e9); }
.render .chk { margin-right: 5px; }
.size { width: 12px; height: 12px; margin: 10px 0 0 2px; }
```

FILE: map.js
```js
const stations = [
  [535,338],[591,358.5],[671,295],[781,328.5],[660,377],[718,407],[617,438],[658,423],
  [644,486],[699,475],[674,504],[677,524],[626,533],[652,532],[703,552],[564,527],
  [753,532],[775,578],[783,460],[812,504],[837,430],[899,425],[915,473],[895,531],
  [982,543],[840,605],[911,617],[718,618],[633,601],[608,644],[649,641]
];
const ns = 'http://www.w3.org/2000/svg';
function ring(groupId, r, attrs) {
  const g = document.getElementById(groupId);
  for (const [x, y] of stations) {
    const c = document.createElementNS(ns, 'circle');
    c.setAttribute('cx', x);
    c.setAttribute('cy', y);
    c.setAttribute('r', r);
    for (const k in attrs) c.setAttribute(k, attrs[k]);
    g.appendChild(c);
  }
}
ring('halo', 34.7, { fill: '#2b2114' });
ring('buffers', 33.7, { fill: '#fdbf6f' });
ring('dots', 3.9, { fill: '#3b1fa4', stroke: '#1a1030' });
```
